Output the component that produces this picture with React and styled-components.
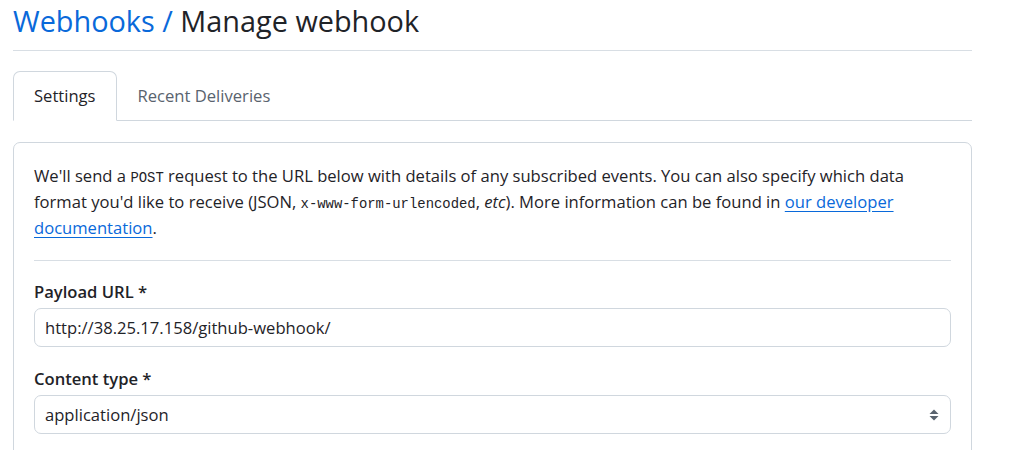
import styled, { createGlobalStyle } from "styled-components";

const Global = createGlobalStyle`
    body {
        margin: 0;
        background: #ffffff;
        font-family: "Open Sans", "Noto Sans", sans-serif;
        color: #1f2328;
    }
`

const Pagina = styled.div`
    box-sizing: border-box;
    width: 972px;
    padding-left: 13px;
`

const Cabecalho = styled.div`
    border-bottom: 1px solid #d8dee4;
    padding-bottom: 8px;
`

const Titulo = styled.h1`
    margin: 0;
    font-size: 28.85px;
    font-weight: 400;
    line-height: 42px;
    color: #1f2328;

    a {
        color: #0969da;
        text-decoration: none;
    }
`

const Abas = styled.nav`
    display: flex;
    margin-top: 20px;
    border-bottom: 1px solid #d0d7de;
`

const Aba = styled.a`
    box-sizing: border-box;
    padding: 10px 20px;
    margin-bottom: -1px;
    font-size: 16.6px;
    line-height: 28px;
    color: ${props => props.$ativa ? "#1f2328" : "#59636e"};
    background: ${props => props.$ativa ? "#ffffff" : "transparent"};
    border: 1px solid ${props => props.$ativa ? "#d0d7de" : "transparent"};
    border-bottom-color: ${props => props.$ativa ? "#ffffff" : "transparent"};
    border-radius: 7px 7px 0 0;
    text-decoration: none;
`

const Cartao = styled.div`
    margin-top: 21px;
    border: 1px solid #d0d7de;
    border-radius: 7px;
    padding: 20px 20px 0;
    min-height: 320px;
`

const Texto = styled.p`
    margin: 0;
    font-size: 16.6px;
    line-height: 26px;

    a {
        color: #0969da;
        text-decoration: underline;
        text-underline-offset: 3px;
    }
`

const Codigo = styled.code`
    font-family: "Liberation Mono", "DejaVu Sans Mono", monospace;
    font-size: 13.9px;
    line-height: 1;
`

const Divisoria = styled.hr`
    margin: 19px 0 20px;
    border: 0;
    border-top: 1px solid #d8dee4;
`

const Grupo = styled.div`
    margin-bottom: 21px;
`

const Rotulo = styled.label`
    display: block;
    font-size: 16.6px;
    font-weight: 600;
    line-height: 22px;
    margin-bottom: 5px;
`

const Campo = styled.div`
    box-sizing: border-box;
    display: flex;
    align-items: center;
    justify-content: space-between;
    height: 39px;
    padding: 0 11px 0 10px;
    border: 1px solid #d0d7de;
    border-radius: 7px;
    font-size: 16.6px;
    color: #1f2328;
`

const Seta = () => (
    <svg width="10" height="14" viewBox="0 0 10 14">
        <path d="M5 1.5 L9.5 6 H0.5 Z" fill="#59636e" />
        <path d="M5 12.5 L9.5 8 H0.5 Z" fill="#59636e" />
    </svg>
)

const App = () => {
    return (
        <>
            <Global />
            <Pagina>
                <Cabecalho>
                    <Titulo><a href="#">Webhooks</a> <a href="#">/</a> Manage webhook</Titulo>
                </Cabecalho>
                <Abas>
                    <Aba href="#" $ativa>Settings</Aba>
                    <Aba href="#">Recent Deliveries</Aba>
                </Abas>
                <Cartao>
                    <Texto>
                        We'll send a <Codigo>POST</Codigo> request to the URL below with details of any subscribed events. You can also specify which data<br />
                        format you'd like to receive (JSON, <Codigo>x-www-form-urlencoded</Codigo>, <em>etc</em>). More information can be found in <a href="#">our developer</a><br />
                        <a href="#">documentation</a>.
                    </Texto>
                    <Divisoria />
                    <Grupo>
                        <Rotulo>Payload URL *</Rotulo>
                        <Campo>http://38.25.17.158/github-webhook/</Campo>
                    </Grupo>
                    <Grupo>
                        <Rotulo>Content type *</Rotulo>
                        <Campo>application/json <Seta /></Campo>
                    </Grupo>
                </Cartao>
            </Pagina>
        </>
    );
}

export default App
